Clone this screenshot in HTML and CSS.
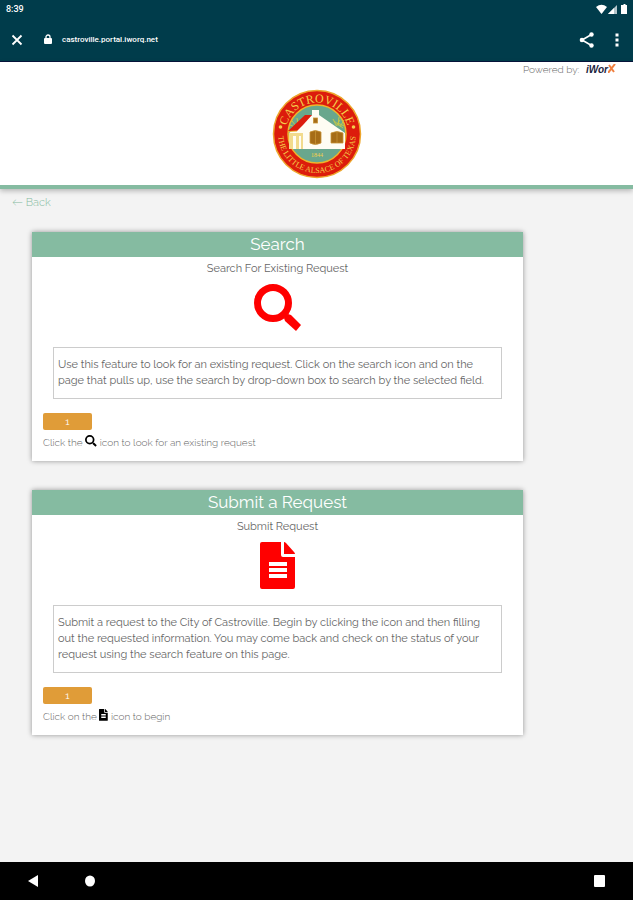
FILE: index.html
```html
<!DOCTYPE html>
<html lang="en">
  <head>
    <meta charset="UTF-8" />
    <meta name="viewport" content="width=device-width, initial-scale=1.0" />
    <title>Castroville Portal</title>
    <link rel="stylesheet" href="styles.css">
  </head>
  <body>
    <svg width="0" height="0" class="symbols">
      <symbol id="search" viewBox="0 0 48 48">
        <circle cx="19" cy="19" r="15.500" fill="none" stroke="currentColor" stroke-width="7" />
        <path d="M30 34l4-4 3 1L47 41l-5 6L31 37z" fill="currentColor" />
      </symbol>
      <symbol id="file" viewBox="0 0 36 48">
        <path fill="currentColor" fill-rule="evenodd" d="M2 0h19v13q0 2 2 2h12v30q0 2-2 2H2q-2 0-2-2V2q0-2 2-2zM9 20v4h18v-4zM9 26v4h18v-4zM9 32v4h18v-4z" />
        <path fill="currentColor" d="M24 0q1 0 2 1l8 9q1 1 1 2H24z" />
      </symbol>
    </svg>
    <div class="browser">
      <div class="status">
        <span>8:39</span>
        <svg class="status_icons" width="33" height="11" viewBox="0 0 33 11">
          <path fill="#fff" d="M0 3q5.500-4.500 11 0L5.500 10z" />
          <path fill="#b3c4ca" d="M12 10l9-9v9z" />
          <path fill="#fff" d="M12 10l6-6v6z" />
          <path fill="#fff" d="M26 1h1.500V0h2v1H31v9h-6V1z" />
        </svg>
      </div>
      <div class="toolbar">
        <button class="tool" aria-label="Close">
          <svg width="16" height="16" viewBox="0 0 16 16"><path d="M3.500 3.500l9 9M12.500 3.500l-9 9" stroke="#fff" stroke-width="1.800" /></svg>
        </button>
        <svg class="lock" width="10" height="11" viewBox="0 0 10 11">
          <rect x="1" y="4" width="8" height="6" rx="1" fill="#fff" />
          <path d="M3 4V3a2 2 0 0 1 4 0v1" fill="none" stroke="#fff" stroke-width="1.300" />
        </svg>
        <span class="address">castroville.portal.iworq.net</span>
        <button class="tool" aria-label="Share">
          <svg width="16" height="16" viewBox="0 0 16 16">
            <path d="M12.500 2.500L3 8l9.500 5.500" fill="none" stroke="#fff" stroke-width="1.600" />
            <circle cx="12.500" cy="2.500" r="2.200" fill="#fff" /><circle cx="3" cy="8" r="2.300" fill="#fff" /><circle cx="12.500" cy="13.500" r="2.200" fill="#fff" />
          </svg>
        </button>
        <button class="tool" aria-label="Menu">
          <svg width="16" height="16" viewBox="0 0 16 16"><path fill="#fff" d="M6.500 1.500h3v3h-3zM6.500 6.500h3v3h-3zM6.500 11.500h3v3h-3z" /></svg>
        </button>
      </div>
    </div>
    <header class="header">
      <div class="powered">
        Powered by:
        <span class="iworq">iWor<svg width="8" height="9" viewBox="0 0 8 9"><path d="M1 1l5 7M7 0L0 9" stroke="#f08040" stroke-width="2" /></svg></span>
      </div>
      <svg class="seal" width="90" height="90" viewBox="0 0 90 90">
        <defs>
          <path id="top" d="M13.500 45a31.500 31.500 0 0 1 63 0" />
          <path id="bottom" d="M7.300 36a38.800 38.800 0 1 0 75.400 0" />
        </defs>
        <circle cx="45" cy="45" r="43.500" fill="#dc1c0c" stroke="#eda62c" stroke-width="1.500" />
        <circle cx="45" cy="45" r="29" fill="#69a78d" stroke="#efb52c" stroke-width="1.500" />
        <g stroke="#c4c84a" stroke-width="1" fill="none">
          <path d="M64 36l-3-6M66 37l1-9M68 38l4-7M71 39l-9-7M68 31l-4 6M72 37l-6-3M18 36l5 2M20 32l4 5M25 29l1 6" />
        </g>
        <path fill="#fffdf3" d="M17 44l23-18v-5h7v5l26 18v16H17z" />
        <path fill="#f2db8c" d="M17 44h14v16H17z" />
        <path fill="#fffdf3" d="M21 47h3v13h-3zM27 47h2v13h-2z" />
        <path fill="#dc1c0c" d="M16 42l17-16h7l-9 10-6 6z" />
        <path d="M16 42.500l9-.5" stroke="#efb52c" />
        <g fill="#a66d17" stroke="#c79335" stroke-width=".8">
          <rect x="41.500" y="29" width="4" height="5" />
          <path d="M38 43q5-3 11 0v11q-6 3-11 0zM59 44q6-3 12 0v10H59zM43.500 42v13M65 43v11" />
        </g>
        <circle cx="8.500" cy="38" r="1.800" fill="#f6cc4b" />
        <circle cx="81.500" cy="38" r="1.800" fill="#f6cc4b" />
        <text class="seal_name"><textPath href="#top" startOffset="50%" text-anchor="middle">CASTROVILLE</textPath></text>
        <text class="seal_motto"><textPath href="#bottom" startOffset="50%" text-anchor="middle">THE LITTLE ALSACE OF TEXAS</textPath></text>
        <text class="seal_year" x="45" y="68" text-anchor="middle">1844</text>
      </svg>
    </header>
    <main class="content">
      <a class="back" href="#">← Back</a>
      <section class="card">
        <h2 class="card_title">Search</h2>
        <div class="card_body">
          <p class="card_sub">Search For Existing Request</p>
          <a class="card_icon" href="#" aria-label="Search For Existing Request"><svg width="48" height="48"><use href="#search" /></svg></a>
          <p class="info">Use this feature to look for an existing request. Click on the search icon and on the<br>page that pulls up, use the search by drop-down box to search by the selected field.</p>
          <button class="step">1</button>
          <p class="hint">Click the <svg width="12" height="12"><use href="#search" /></svg> icon to look for an existing request</p>
        </div>
      </section>
      <section class="card">
        <h2 class="card_title">Submit a Request</h2>
        <div class="card_body">
          <p class="card_sub">Submit Request</p>
          <a class="card_icon" href="#" aria-label="Submit Request"><svg width="36" height="48"><use href="#file" /></svg></a>
          <p class="info">Submit a request to the City of Castroville. Begin by clicking the icon and then filling<br>out the requested information. You may come back and check on the status of your<br>request using the search feature on this page.</p>
          <button class="step">1</button>
          <p class="hint">Click on the <svg width="9" height="12"><use href="#file" /></svg> icon to begin</p>
        </div>
      </section>
    </main>
    <nav class="navbar">
      <button class="tool" aria-label="Go back"><svg width="16" height="16" viewBox="0 0 16 16"><path fill="#fff" d="M2 8l10-6v12z" /></svg></button>
      <button class="tool" aria-label="Home"><svg width="16" height="16" viewBox="0 0 16 16"><ellipse cx="8" cy="8" rx="5" ry="5.500" fill="#fff" /></svg></button>
      <button class="tool" aria-label="Recent apps"><svg width="16" height="16" viewBox="0 0 16 16"><rect x="2" y="2" width="11" height="12" rx="1" fill="#fff" /></svg></button>
    </nav>
  </body>
</html>
```
FILE: styles.css
```css
body {
  margin: 0;
  min-height: 100vh;
  display: flex;
  flex-direction: column;
  background: #f3f3f3;
  color: #666;
  font-family: Raleway, Lato, sans-serif;
  font-weight: 300;
}

p,
h2 {
  margin: 0;
}

.symbols {
  position: absolute;
}

.browser {
  background: #003c4b;
  border-bottom: 1px solid #07143c;
  color: #fff;
  font-family: Roboto, sans-serif;
  font-weight: 500;
}

.status {
  display: flex;
  justify-content: space-between;
  align-items: center;
  height: 18px;
  padding: 0 4px 0 6px;
  font-size: 9px;
}

.toolbar {
  display: flex;
  align-items: center;
  height: 43px;
  padding: 0 8px 0 9px;
}

.tool {
  display: flex;
  padding: 0;
  border: none;
  background: none;
}

.lock {
  margin: 0 9px 0 18px;
}

.address {
  flex: 1;
  font-size: 8px;
}

.toolbar .tool:last-child {
  margin-left: 14px;
}

.header {
  display: flex;
  flex-direction: column;
  align-items: center;
  background: #fff;
  border-bottom: 4px solid #85bba1;
  box-shadow: 0 2px 5px rgba(0, 0, 0, 0.25);
}

.powered {
  align-self: flex-end;
  height: 16px;
  margin-right: 17px;
  font-size: 10px;
  line-height: 16px;
}

.iworq {
  margin-left: 4px;
  color: #1c2440;
  font-family: "Liberation Sans", sans-serif;
  font-style: italic;
  font-weight: bold;
}

.seal {
  margin: 11px 0 6px;
}

.seal text {
  fill: #f4cf4b;
  font-family: "Liberation Serif", serif;
  font-weight: 400;
}

.seal_name {
  font-size: 12px;
}

.seal_motto {
  font-size: 8px;
}

.seal .seal_year {
  font-size: 6px;
}

.content {
  flex: 1;
  padding: 6px 110px 0 32px;
}

.back {
  display: block;
  height: 16px;
  margin: 0 0 21px -20px;
  color: #85bba1;
  font-size: 11px;
  line-height: 16px;
  text-decoration: none;
}

.card {
  margin-bottom: 29px;
  background: #fff;
  box-shadow: 0 0 5px rgba(0, 0, 0, 0.4);
}

.card_title {
  background: #85bba1;
  color: #fff;
  font-size: 17px;
  font-weight: 400;
  line-height: 25px;
  text-align: center;
}

.card_body {
  padding: 4px 11px 10px;
}

.card_sub {
  font-size: 11px;
  font-weight: 400;
  line-height: 16px;
  text-align: center;
}

.card_icon {
  display: flex;
  justify-content: center;
  margin: 7px 0 15px;
  color: #f00;
}

.info {
  margin: 0 10px 14px;
  padding: 9px 4px;
  border: 1px solid #ccc;
  font-size: 11px;
  font-weight: 400;
  line-height: 16px;
}

.step {
  display: block;
  width: 49px;
  height: 17px;
  padding: 0;
  border: none;
  border-radius: 2px;
  background: #e09c38;
  color: #fff;
  font-family: inherit;
  font-size: 10px;
}

.hint {
  margin-top: 5px;
  font-size: 10px;
  line-height: 16px;
}

.hint svg {
  color: #000;
  vertical-align: -1px;
}

.navbar {
  display: flex;
  align-items: center;
  gap: 40px;
  height: 38px;
  padding: 0 25px 0 26px;
  background: #000;
}

.navbar .tool:last-child {
  margin-left: auto;
}
```
